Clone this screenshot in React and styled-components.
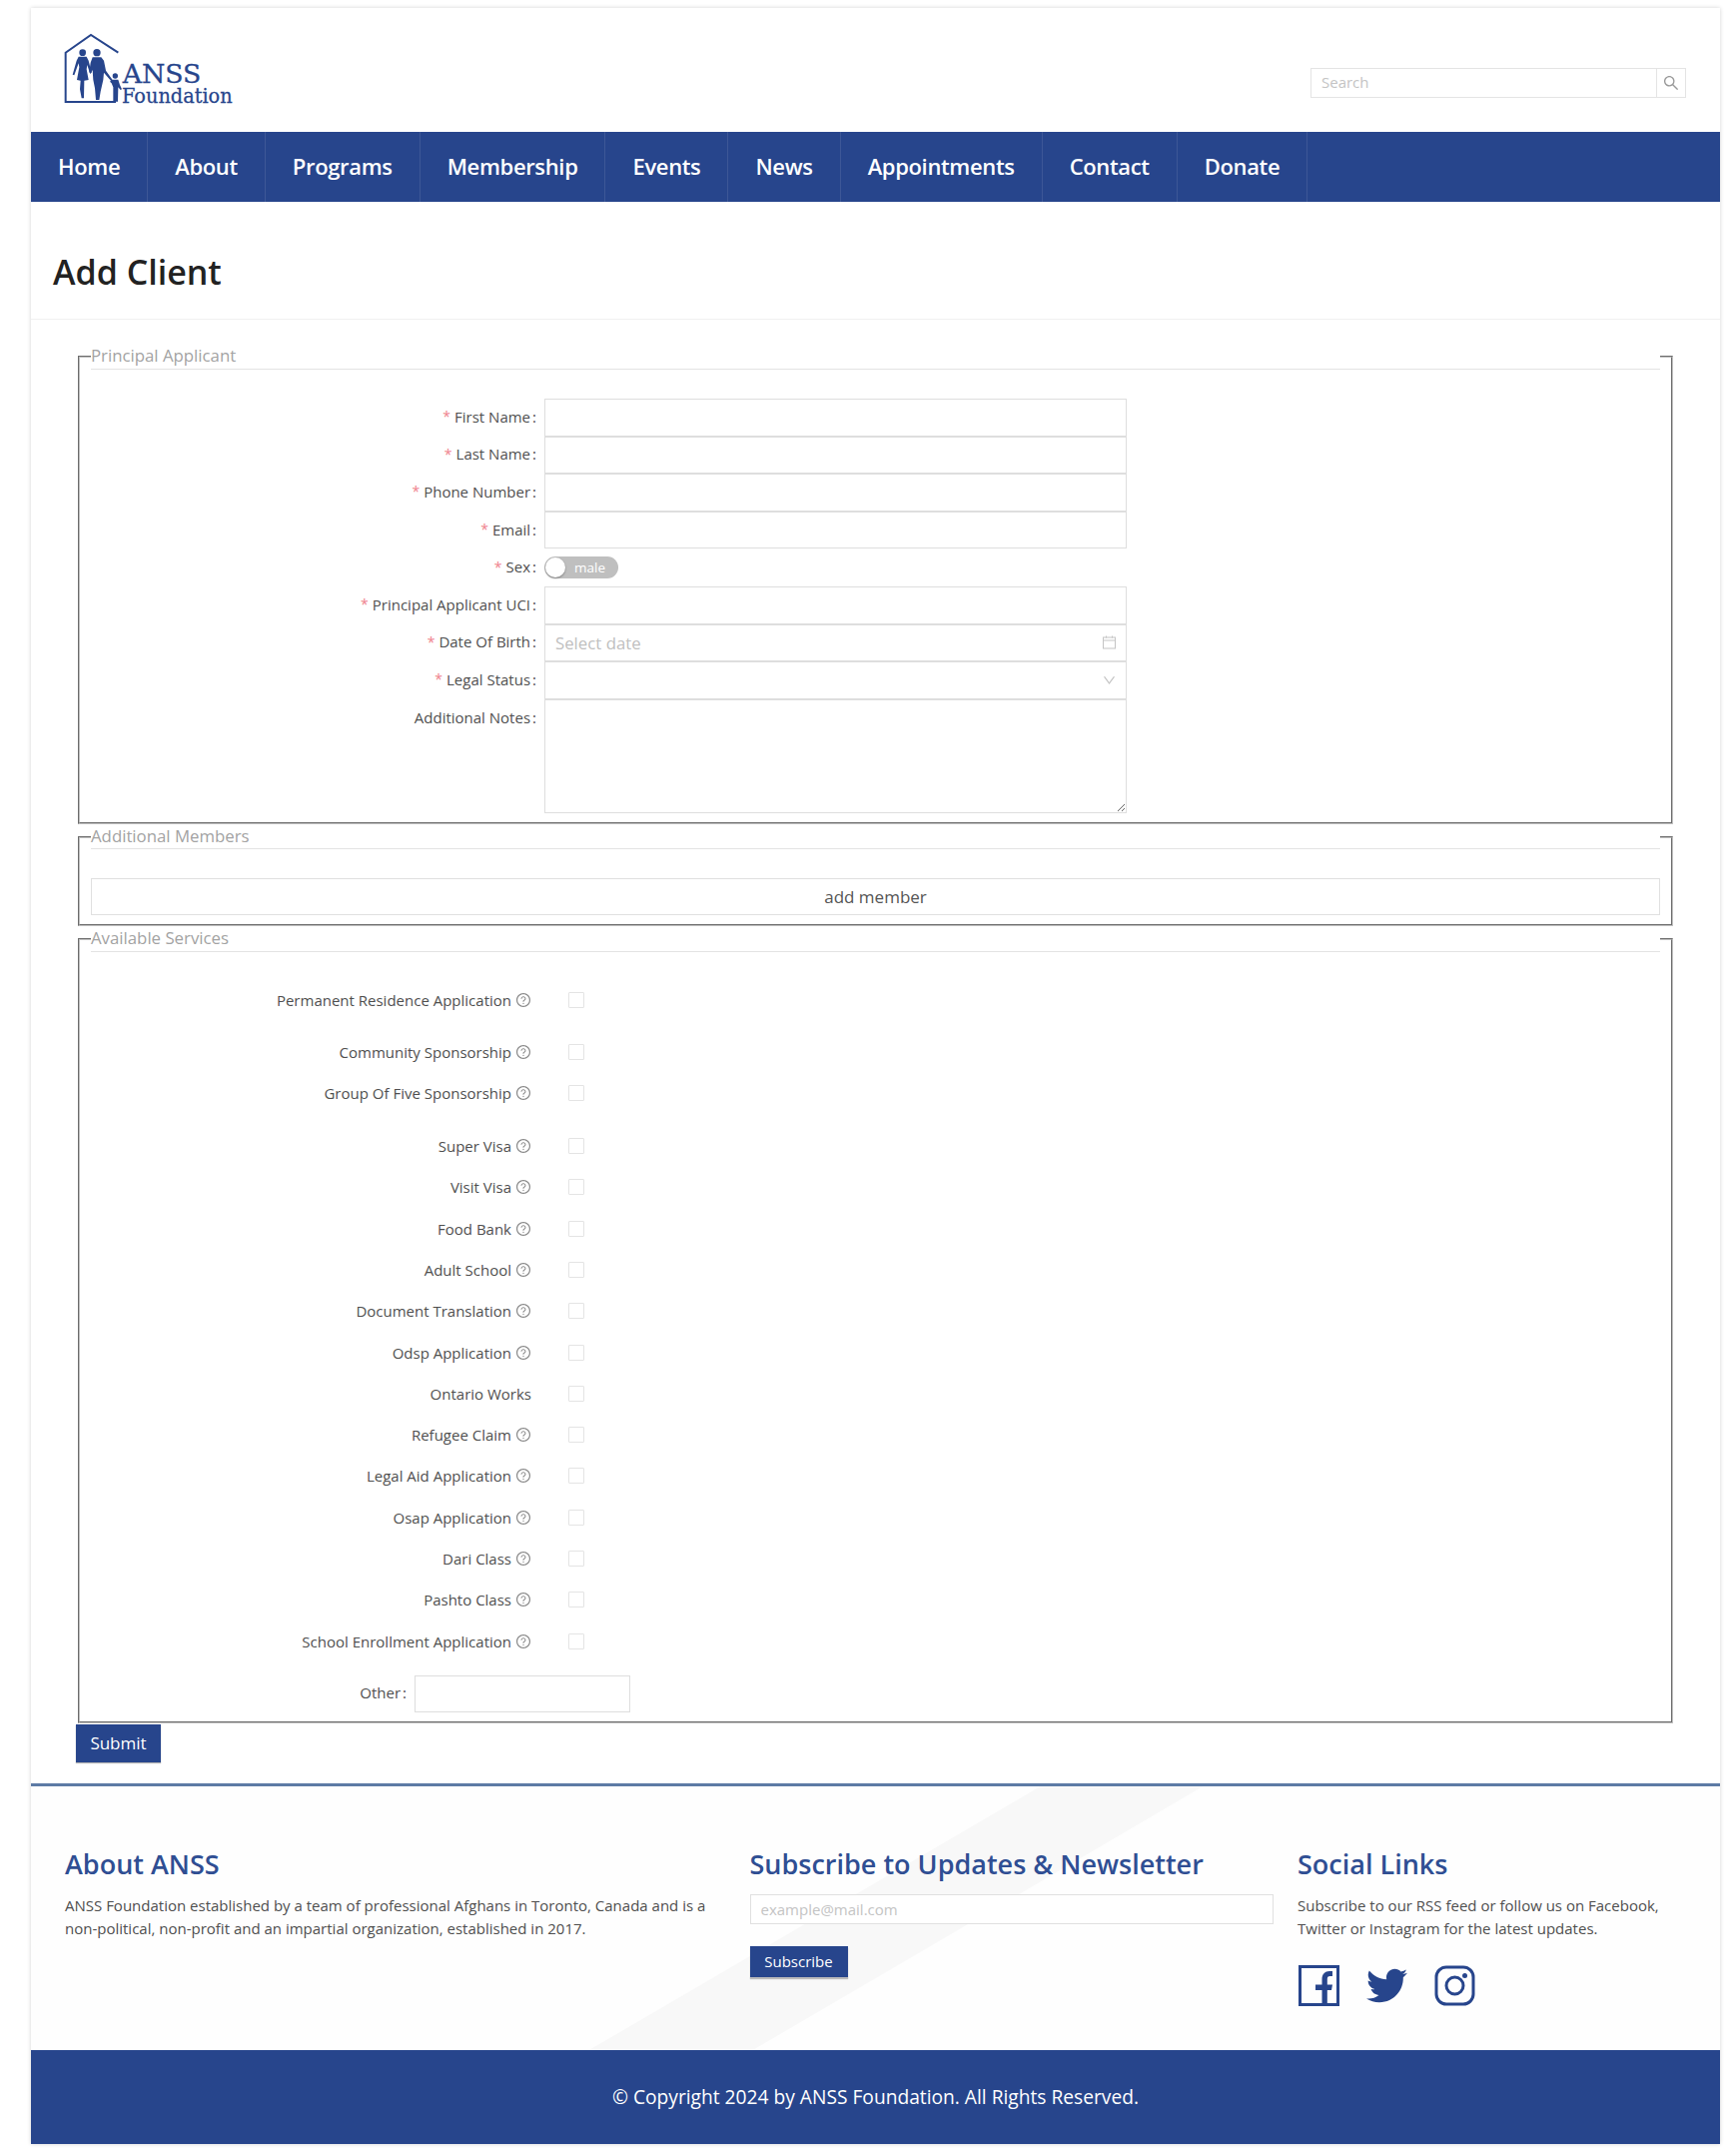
import React from "react";
import styled, { createGlobalStyle } from "styled-components";
import { AiOutlineQuestionCircle, AiOutlineDown, AiOutlineSearch } from "react-icons/ai";
import { FaTwitter } from "react-icons/fa";

const BLUE = "#27458c";

const Global = createGlobalStyle`
  html, body { margin: 0; padding: 0; background: #fff; }
  body { font-family: "Open Sans", "Liberation Sans", sans-serif; color: #555; }
  * { box-sizing: border-box; }
`;

const Page = styled.div`
  padding: 8px 16px 7px 31px;
`;
const Card = styled.div`
  background: #fff;
  box-shadow: 0 0 4px rgba(0, 0, 0, 0.18);
`;
const Header = styled.header`
  height: 124px;
  padding: 22px 34px 0 29px;
  display: flex;
  justify-content: space-between;
`;
const LogoSvg = styled.svg`
  width: 180px;
  height: 80px;
  display: block;
`;
const SearchBox = styled.div`
  margin-top: 38px;
  width: 376px;
  height: 30px;
  display: flex;
  border: 1px solid #e4e4e4;
`;
const SearchInput = styled.input`
  flex: 1;
  min-width: 0;
  border: 0;
  outline: 0;
  padding: 0 10px 2px;
  font: 15px "Open Sans", sans-serif;
  &::placeholder { color: #c4c4c4; }
`;
const SearchBtn = styled.div`
  width: 29px;
  border-left: 1px solid #e4e4e4;
  display: flex;
  align-items: center;
  justify-content: center;
  color: #999;
  font-size: 18px;
`;
const Nav = styled.nav`
  height: 70px;
  background: ${BLUE};
  display: flex;
`;
const NavItem = styled.a`
  padding: 0 27px 2px;
  display: flex;
  align-items: center;
  color: #fff;
  font-size: 22px;
  font-weight: 600;
  letter-spacing: -0.35px;
  border-right: 1px solid rgba(255, 255, 255, 0.1);
`;
const TitleBar = styled.div`
  height: 118px;
  padding: 20px 0 0 22px;
  display: flex;
  align-items: center;
  border-bottom: 1px solid #f0f0f0;
`;
const Title = styled.h1`
  margin: 3px 0 0;
  font-size: 34px;
  font-weight: 600;
  color: #222;
`;
const Content = styled.main`
  padding: 24px 47px 0 47px;
`;
const Field = styled.fieldset`
  margin: 0;
  min-width: 0;
  padding: 0 11px ${(p) => p.$pb || 9}px;
  border: 2px groove rgb(192, 192, 192);
  font-size: 15px;
`;
const Legend = styled.legend`
  width: 100%;
  padding: 0;
  height: 25.6px;
  line-height: 24px;
  font-size: 16.8px;
  color: #a3a3a3;
  border-bottom: 1px solid #e3e3e3;
`;
const FormBody = styled.div`
  margin-top: 29.4px;
`;
const Row = styled.div`
  display: grid;
  grid-template-columns: 454px 583px;
  height: ${(p) => p.$h || 37.6}px;
`;
const Label = styled.label`
  display: flex;
  align-items: center;
  justify-content: flex-end;
  padding: 0 8px 2px 0;
  color: #4f4f4f;
  white-space: nowrap;
  height: 37.6px;
`;
const Star = styled.span`
  color: #ef7f8c;
  margin-right: 4px;
  font-size: 14px;
`;
const Colon = styled.span`
  margin-left: 2px;
`;
const TextInput = styled.input`
  width: 100%;
  height: 100%;
  border: 1px solid #dedede;
  background: #fff;
  outline: 0;
  padding: 0 10px;
  font: 16.8px "Open Sans", sans-serif;
  &::placeholder { color: #c0c0c0; }
`;
const FieldWrap = styled.div`
  position: relative;
  height: 100%;
`;
const FieldIcon = styled.span`
  position: absolute;
  right: 10px;
  top: 50%;
  transform: translateY(-50%);
  display: flex;
  color: #c4c4c4;
  font-size: 15px;
`;
const Notes = styled.textarea`
  display: block;
  width: 100%;
  height: 114px;
  border: 1px solid #dedede;
  outline: 0;
  resize: vertical;
`;
const Toggle = styled.div`
  width: 74px;
  height: 22px;
  margin-top: 8px;
  border-radius: 11px;
  background: #bfbfbf;
  position: relative;
  color: #fff;
  font-size: 13.5px;
  line-height: 22px;
  padding-left: 30px;
`;
const Knob = styled.span`
  position: absolute;
  left: 1px;
  top: 1px;
  width: 20px;
  height: 20px;
  border-radius: 50%;
  background: #fff;
  box-shadow: 0 1px 2px rgba(0, 0, 0, 0.35);
`;
const AddBtn = styled.div`
  margin-top: 28.3px;
  height: 37px;
  border: 1px solid #e0e0e0;
  display: flex;
  align-items: center;
  justify-content: center;
  font-size: 17px;
  color: #555;
`;
const Services = styled.div`
  margin-top: 27.4px;
`;
const ServiceRow = styled.div`
  display: flex;
  align-items: center;
  height: 41.3px;
  margin-bottom: ${(p) => (p.$gap ? 11.3 : 0)}px;
`;
const ServiceLabel = styled.div`
  width: 441px;
  display: flex;
  align-items: center;
  justify-content: flex-end;
  gap: 4px;
  color: #4f4f4f;
`;
const Help = styled(AiOutlineQuestionCircle)`
  font-size: 16px;
  color: #888;
`;
const Check = styled.span`
  margin-left: 37px;
  width: 16px;
  height: 16px;
  border: 1px solid #e4e4e4;
  border-radius: 1px;
`;
const OtherRow = styled.div`
  display: grid;
  grid-template-columns: 324px 216px;
  height: 37px;
  margin-top: 13.6px;
`;
const OtherLabel = styled(Label)`
  height: 37px;
`;
const Submit = styled.button`
  display: block;
  margin: 1px 0 0 -2px;
  width: 85px;
  height: 38px;
  border: 0;
  background: ${BLUE};
  color: #fff;
  font: 17px "Open Sans", sans-serif;
  box-shadow: 0 1px 1px rgba(0, 0, 0, 0.3);
`;
const FooterMain = styled.footer`
  margin-top: 21.5px;
  border-top: 3px solid #5d7ba5;
  height: 266.2px;
  padding: 60px 0 0 34px;
  position: relative;
  display: grid;
  grid-template-columns: 685.5px 548.5px 1fr;
  overflow: hidden;
  background: #fefefe;
  &::before {
    content: "";
    position: absolute;
    inset: 0;
    background: #f8f8f8;
    clip-path: polygon(1010px 0, 1173px 0, 724px 263px, 560px 263px);
  }
`;
const FooterCol = styled.div`
  position: relative;
`;
const FooterHead = styled.h3`
  margin: 0 0 11.6px;
  font-size: 27px;
  line-height: 36px;
  font-weight: 600;
  color: #2f4e93;
`;
const FooterText = styled.p`
  margin: 0;
  width: ${(p) => p.$w}px;
  font-size: 15px;
  line-height: 22.7px;
  color: #4f4f4f;
`;
const MailInput = styled.input`
  display: block;
  width: 524.5px;
  height: 30px;
  border: 1px solid #e0e0e0;
  background: #fff;
  outline: 0;
  padding: 0 10px;
  font: 15px "Open Sans", sans-serif;
  &::placeholder { color: #c4c4c4; }
`;
const SubscribeBtn = styled.button`
  display: block;
  margin-top: 22px;
  width: 98px;
  height: 31px;
  border: 0;
  background: ${BLUE};
  color: #fff;
  font: 15px "Open Sans", sans-serif;
  box-shadow: 0 2px 1px rgba(0, 0, 0, 0.25);
`;
const Socials = styled.div`
  margin-top: 26px;
  display: flex;
  align-items: center;
  gap: 27px;
  color: ${BLUE};
  padding-left: 1px;
`;
const Copy = styled.div`
  height: 94.5px;
  background: ${BLUE};
  color: #fff;
  font-size: 19.2px;
  display: flex;
  align-items: center;
  justify-content: center;
`;

const Logo = () => (
  <LogoSvg viewBox="0 0 540 240">
    <g fill="none" stroke={BLUE} strokeWidth="6">
      <polyline points="175,68 93,15 17,68 17,216 165,216 165,190" />
    </g>
    <g fill={BLUE}>
      <circle cx="68" cy="68" r="10" />
      <path d="M56 80 L80 80 L86 92 L95 128 L90 130 L82 105 L80 118 L86 150 L73 152 L72 205 L65 205 L60 178 L62 152 L51 150 L58 112 L56 100 L43 136 L38 134 L50 92 Z" />
      <circle cx="111" cy="68" r="11" />
      <path d="M98 82 L124 82 L132 92 L138 122 L158 150 L154 154 L132 128 L130 150 L122 185 L118 210 L108 210 L105 175 L100 150 L98 120 L92 132 L88 126 L92 98 Z" />
      <circle cx="166" cy="138" r="8" />
      <path d="M157 149 L175 149 L180 165 L186 178 L182 180 L175 172 L174 215 L160 215 L160 172 L155 160 L150 155 Z" />
      <text x="188" y="160" fontFamily="'DejaVu Serif', serif" fontSize="80" stroke={BLUE} strokeWidth="1" textLength="236" lengthAdjust="spacingAndGlyphs">ANSS</text>
      <text x="186" y="218" fontFamily="'DejaVu Serif', serif" fontSize="60" stroke={BLUE} strokeWidth="0.8" textLength="332" lengthAdjust="spacingAndGlyphs">Foundation</text>
    </g>
  </LogoSvg>
);

const CalendarIcon = () => (
  <svg width="15" height="15" viewBox="0 0 15 15" fill="none" stroke="currentColor" strokeWidth="1">
    <rect x="1.5" y="2.5" width="12" height="11" />
    <path d="M1.5 5.5H13.5M4.5 1V3M10.5 1V3" />
  </svg>
);

const FbIcon = () => (
  <svg width="41" height="41" viewBox="0 0 41 41">
    <rect x="1.5" y="1.5" width="38" height="38" fill="none" stroke="currentColor" strokeWidth="3" />
    <path fill="currentColor" d="M23.5 39V25H17V19.5H23.5V14C23.5 9 26.5 6 31 6H34V11H31.5C29.5 11 28.8 12 28.8 14V19.5H34L33 25H28.8V39Z" />
  </svg>
);
const IgIcon = () => (
  <svg width="41" height="41" viewBox="0 0 41 41" fill="none" stroke="currentColor" strokeWidth="3">
    <rect x="2" y="2" width="37" height="37" rx="10" />
    <circle cx="20.5" cy="20.5" r="8.5" />
    <circle cx="30.5" cy="10.5" r="2.5" fill="currentColor" stroke="none" />
  </svg>
);

const FormField = ({ label, required, children, h }) => (
  <Row $h={h}>
    <Label>
      {required && <Star>*</Star>}
      {label}
      <Colon>:</Colon>
    </Label>
    {children}
  </Row>
);

const navItems = ["Home", "About", "Programs", "Membership", "Events", "News", "Appointments", "Contact", "Donate"];
const services = [
  { n: "Permanent Residence Application", gap: true },
  { n: "Community Sponsorship" },
  { n: "Group Of Five Sponsorship", gap: true },
  { n: "Super Visa" },
  { n: "Visit Visa" },
  { n: "Food Bank" },
  { n: "Adult School" },
  { n: "Document Translation" },
  { n: "Odsp Application" },
  { n: "Ontario Works", noHelp: true },
  { n: "Refugee Claim" },
  { n: "Legal Aid Application" },
  { n: "Osap Application" },
  { n: "Dari Class" },
  { n: "Pashto Class" },
  { n: "School Enrollment Application", gap: true },
];

export default function App() {
  return (
    <Page>
      <Global />
      <Card>
        <Header>
          <Logo />
          <SearchBox>
            <SearchInput placeholder="Search" />
            <SearchBtn><AiOutlineSearch /></SearchBtn>
          </SearchBox>
        </Header>
        <Nav>
          {navItems.map((n) => <NavItem key={n}>{n}</NavItem>)}
        </Nav>
        <TitleBar><Title>Add Client</Title></TitleBar>
        <Content>
          <Field>
            <Legend>Principal Applicant</Legend>
            <FormBody>
              <FormField label="First Name" required><TextInput /></FormField>
              <FormField label="Last Name" required><TextInput /></FormField>
              <FormField label="Phone Number" required><TextInput /></FormField>
              <FormField label="Email" required><TextInput /></FormField>
              <FormField label="Sex" required><Toggle><Knob />male</Toggle></FormField>
              <FormField label="Principal Applicant UCI" required><TextInput /></FormField>
              <FormField label="Date Of Birth" required>
                <FieldWrap>
                  <TextInput placeholder="Select date" />
                  <FieldIcon><CalendarIcon /></FieldIcon>
                </FieldWrap>
              </FormField>
              <FormField label="Legal Status" required>
                <FieldWrap>
                  <TextInput />
                  <FieldIcon><AiOutlineDown /></FieldIcon>
                </FieldWrap>
              </FormField>
              <FormField label="Additional Notes" h={114}><Notes /></FormField>
            </FormBody>
          </Field>
          <Field $pb={9.3}>
            <Legend>Additional Members</Legend>
            <AddBtn>add member</AddBtn>
          </Field>
          <Field>
            <Legend>Available Services</Legend>
            <Services>
              {services.map((s) => (
                <ServiceRow key={s.n} $gap={s.gap}>
                  <ServiceLabel>
                    {s.n}
                    {!s.noHelp && <Help />}
                  </ServiceLabel>
                  <Check />
                </ServiceRow>
              ))}
              <OtherRow>
                <OtherLabel>Other<Colon>:</Colon></OtherLabel>
                <TextInput />
              </OtherRow>
            </Services>
          </Field>
          <Submit>Submit</Submit>
        </Content>
        <FooterMain>
          <FooterCol>
            <FooterHead>About ANSS</FooterHead>
            <FooterText $w={660}>
              ANSS Foundation established by a team of professional Afghans in Toronto, Canada and is a non-political, non-profit and an impartial organization, established in 2017.
            </FooterText>
          </FooterCol>
          <FooterCol>
            <FooterHead>Subscribe to Updates &amp; Newsletter</FooterHead>
            <MailInput placeholder="example@mail.com" />
            <SubscribeBtn>Subscribe</SubscribeBtn>
          </FooterCol>
          <FooterCol>
            <FooterHead>Social Links</FooterHead>
            <FooterText $w={400}>
              Subscribe to our RSS feed or follow us on Facebook, Twitter or Instagram for the latest updates.
            </FooterText>
            <Socials>
              <FbIcon />
              <FaTwitter size={41} />
              <IgIcon />
            </Socials>
          </FooterCol>
        </FooterMain>
        <Copy>© Copyright 2024 by ANSS Foundation. All Rights Reserved.</Copy>
      </Card>
    </Page>
  );
}
